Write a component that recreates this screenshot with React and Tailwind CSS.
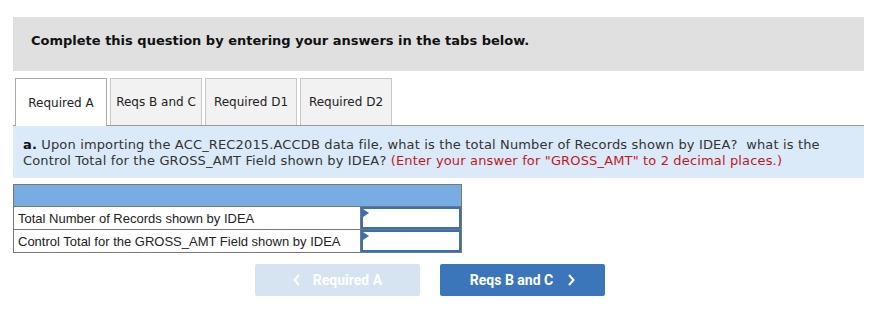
import { useState } from 'react'

const tabs = ['Required A', 'Reqs B and C', 'Required D1', 'Required D2']

function AnswerInput() {
    return (
        <div className="relative h-full w-full border-2 border-[#3a6fb0] bg-white">
            <span className="absolute left-0 top-0 h-0 w-0 border-y-[4px] border-l-[6px] border-y-transparent border-l-[#3a6fb0]" />
            <input className="h-full w-full bg-transparent px-1 text-[13px] outline-none" />
        </div>
    )
}

export default function App() {
    const [active] = useState(0)

    return (
        <div className="w-[893px] h-[322px] bg-white pt-[17px] pl-[13px] font-['DejaVu_Sans',Verdana,sans-serif] text-[#222]">
            <div className="w-[851px] h-[54px] bg-[#e0e0e0] pl-[18px] pt-[14px]">
                <p className="text-[13px] font-bold text-[#111]">Complete this question by entering your answers in the tabs below.</p>
            </div>

            {/* tabs */}
            <div className="mt-[7px] w-[851px] flex items-end gap-[3px] pl-[2px] border-b border-[#999] h-[48px]">
                {tabs.map((t, i) => (
                    <div
                        key={t}
                        className={
                            i === active
                                ? 'w-[92px] h-[48px] -mb-px bg-white border border-b-0 border-[#aaa] flex items-center justify-center text-[12px] text-[#222]'
                                : 'w-[92px] h-[47px] bg-[#f2f2f2] border border-b-0 border-[#c8c8c8] flex items-center justify-center text-[12px] text-[#222]'
                        }
                    >
                        {t}
                    </div>
                ))}
            </div>

            <div className="w-[851px] h-[52px] bg-[#dbeaf8] pl-[10px] pt-[11px] text-[13px] leading-[16px] text-[#333]">
                <p className="w-[800px] tracking-[0.15px]">
                    <span className="font-bold text-[#111]">a.</span> Upon importing the ACC_REC2015.ACCDB data file, what is the total Number of Records shown by IDEA?&nbsp; what is the Control Total for the GROSS_AMT Field shown by IDEA?{' '}
                    <span className="text-[#c4161c]">(Enter your answer for "GROSS_AMT" to 2 decimal places.)</span>
                </p>
            </div>

            {/* answer table */}
            <div className="mt-[6px] w-[449px] border border-[#777] font-['Liberation_Sans',Arial,sans-serif] text-[13px] text-[#222]">
                <div className="h-[22px] bg-[#77ade3] border-b border-[#777]" />
                <div className="flex h-[23px] border-b border-[#777]">
                    <div className="w-[347px] border-r border-[#777] pl-[4px] pt-px flex items-center">Total Number of Records shown by IDEA</div>
                    <div className="flex-1"><AnswerInput /></div>
                </div>
                <div className="flex h-[22px]">
                    <div className="w-[347px] border-r border-[#777] pl-[4px] pt-px flex items-center">Control Total for the GROSS_AMT Field shown by IDEA</div>
                    <div className="flex-1"><AnswerInput /></div>
                </div>
            </div>

            {/* nav buttons */}
            <div className="mt-[11px] ml-[242px] flex gap-[20px] font-['Roboto',sans-serif] text-[14px] font-bold text-white">
                <button className="w-[165px] h-[32px] rounded-[2px] bg-[#d6e3f1] flex items-center justify-center gap-[12px]">
                    <svg width="8" height="12" viewBox="0 0 8 12" fill="none" stroke="white" strokeWidth="2"><path d="M6 1L1.5 6L6 11" /></svg>
                    <span>Required A</span>
                </button>
                <button className="w-[165px] h-[32px] rounded-[2px] bg-[#3b76ba] flex items-center justify-center gap-[14px]">
                    <span>Reqs B and C</span>
                    <svg width="8" height="12" viewBox="0 0 8 12" fill="none" stroke="white" strokeWidth="2"><path d="M2 1L6.5 6L2 11" /></svg>
                </button>
            </div>
        </div>
    )
}
